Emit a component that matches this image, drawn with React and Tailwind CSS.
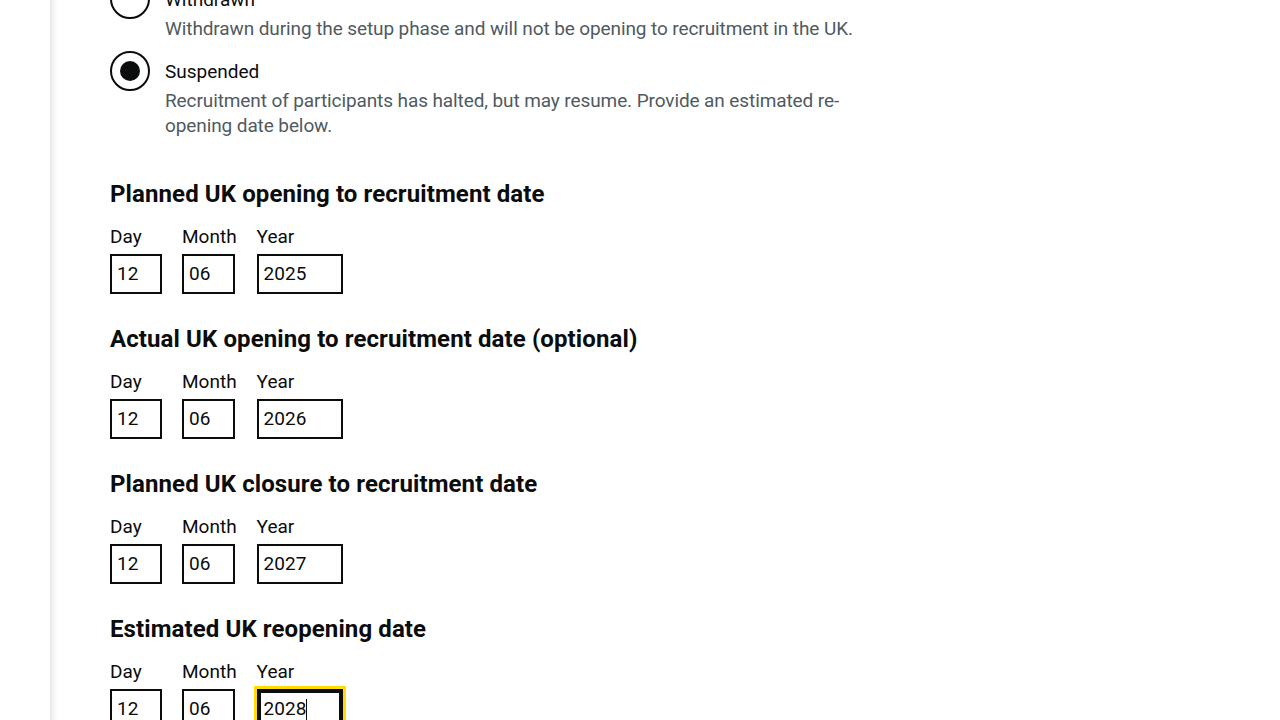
import React from "react";

const font = { fontFamily: "Roboto, 'Liberation Sans', sans-serif" };

function Radio({ checked, label, hint }) {
  return (
    <div className="flex mb-[10px]">
      <div className="w-[40px] h-[40px] shrink-0 rounded-full border-2 border-[#0b0c0c] flex items-center justify-center">
        {checked && <div className="w-[20px] h-[20px] rounded-full bg-[#0b0c0c]" />}
      </div>
      <div className="pl-[15px]">
        <div className="pt-[8px] pb-[4px] text-[19px] leading-[25px] text-[#0b0c0c]">{label}</div>
        <div className="text-[19px] leading-[25px] tracking-[-0.1px] text-[#505a5f]">{hint}</div>
      </div>
    </div>
  );
}

function Box({ width, value, focused }) {
  if (focused) {
    return (
      <div className={`${width} h-[40px] border-2 border-[#0b0c0c] shadow-[inset_0_0_0_2px_#0b0c0c] outline-[3px] outline outline-[#ffdd00] px-[5px] pt-[1px] flex items-center text-[19px] text-[#0b0c0c]`}>
        <span>{value}</span>
        <span className="inline-block w-px h-[22px] bg-[#0b0c0c]" />
      </div>
    );
  }
  return (
    <div className={`${width} h-[40px] border-2 border-[#0b0c0c] px-[5px] pt-[1px] flex items-center text-[19px] text-[#0b0c0c]`}>
      {value}
    </div>
  );
}

function DateGroup({ title, year, focused }) {
  return (
    <div className="mb-[30px]">
      <h2 className="text-[24px] leading-[30px] font-bold tracking-[0.1px] text-[#0b0c0c] mb-[15px]">{title}</h2>
      <div className="flex gap-[20px]">
        <div>
          <div className="text-[19px] leading-[25px] text-[#0b0c0c] mb-[5px]">Day</div>
          <Box width="w-[52px]" value="12" />
        </div>
        <div>
          <div className="text-[19px] leading-[25px] text-[#0b0c0c] mb-[5px]">Month</div>
          <Box width="w-[53px]" value="06" />
        </div>
        <div>
          <div className="text-[19px] leading-[25px] text-[#0b0c0c] mb-[5px]">Year</div>
          <Box width="w-[86px]" value={year} focused={focused} />
        </div>
      </div>
    </div>
  );
}

export default function App() {
  return (
    <div className="flex min-h-[720px] h-[720px] overflow-hidden bg-white" style={font}>
      <div className="w-[50px] shrink-0 bg-white" />
      <div className="w-[8px] shrink-0 bg-gradient-to-r from-[#e6e6e6] via-[#f6f6f6] to-white" />
      <div className="flex-1 pl-[52px]">
        <div className="w-[770px] -mt-[21px]">
          <Radio
            label="Withdrawn"
            hint="Withdrawn during the setup phase and will not be opening to recruitment in the UK."
          />
          <Radio
            checked
            label="Suspended"
            hint="Recruitment of participants has halted, but may resume. Provide an estimated re-opening date below."
          />
          <div className="h-[31px]" />
          <DateGroup title="Planned UK opening to recruitment date" year="2025" />
          <DateGroup title="Actual UK opening to recruitment date (optional)" year="2026" />
          <DateGroup title="Planned UK closure to recruitment date" year="2027" />
          <DateGroup title="Estimated UK reopening date" year="2028" focused />
        </div>
      </div>
    </div>
  );
}
